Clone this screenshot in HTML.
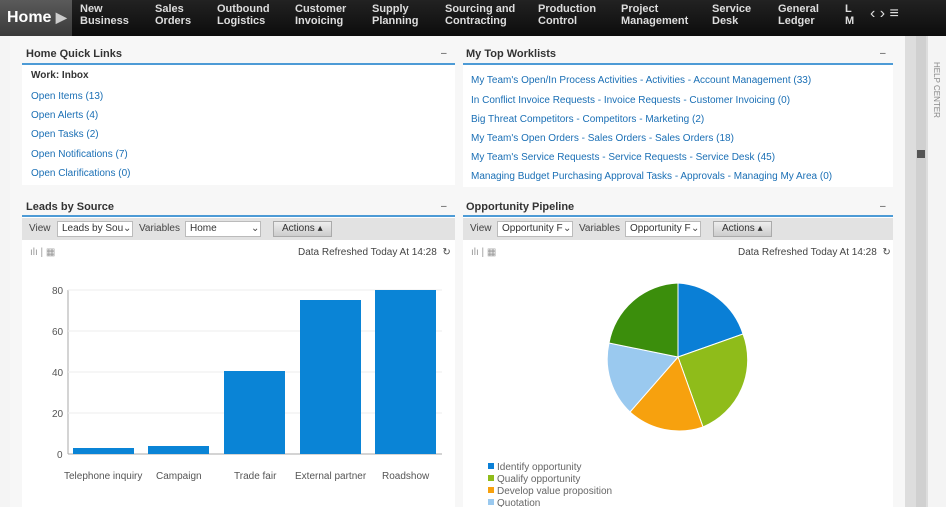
<!DOCTYPE html><html><head><style>
*{margin:0;padding:0;box-sizing:border-box}
body{width:946px;height:507px;overflow:hidden;background:#f4f4f4;font-family:"Liberation Sans",sans-serif;position:relative;font-size:11px;color:#333}
.nav{position:absolute;left:0;top:0;width:946px;height:36px;background:linear-gradient(#222,#0c0c0c)}
.home{position:absolute;left:0;top:0;width:72px;height:36px;background:linear-gradient(#5a5a5a,#3a3a3a);color:#fff;font-weight:bold;font-size:16px;padding:9px 0 0 7px}
.ni{position:absolute;top:3px;color:#ddd;font-size:11px;line-height:12px;font-weight:bold;font-family:"Liberation Sans Narrow","Liberation Sans",sans-serif;font-stretch:condensed}
.a{position:absolute;font-size:10px;color:#1a6fb5}
.t{position:absolute;font-size:11px;font-weight:bold;color:#333}
.ln{position:absolute;height:2px;background:#4d9bd6}
.panel{position:absolute;background:#fff}
.tb{position:absolute;height:22px;background:#e2e2e2}
.sel{position:absolute;top:3px;height:16px;background:#fff;border:1px solid #bbb;font-size:10px;padding:1px 4px;color:#333;white-space:nowrap;overflow:hidden}
.btn{position:absolute;top:3px;height:16px;background:linear-gradient(#eee,#ccc);border:1px solid #aaa;font-size:10px;padding:1px 8px}
.s{position:absolute;font-size:10px;color:#444;white-space:nowrap}
</style></head><body>
<div class="nav">
<div class="home">Home <span style="font-size:14px;color:#ccc">&#9654;</span></div>
<div class="ni" style="left:80px">New<br>Business</div>
<div class="ni" style="left:155px">Sales<br>Orders</div>
<div class="ni" style="left:217px">Outbound<br>Logistics</div>
<div class="ni" style="left:295px">Customer<br>Invoicing</div>
<div class="ni" style="left:372px">Supply<br>Planning</div>
<div class="ni" style="left:445px">Sourcing and<br>Contracting</div>
<div class="ni" style="left:538px">Production<br>Control</div>
<div class="ni" style="left:621px">Project<br>Management</div>
<div class="ni" style="left:712px">Service<br>Desk</div>
<div class="ni" style="left:778px">General<br>Ledger</div>
<div class="ni" style="left:845px">L<br>M</div>
<div class="ni" style="left:870px;top:8px;font-size:16px;font-weight:normal">&lsaquo; &rsaquo; &#8801;</div>
</div>
<div style="position:absolute;left:905px;top:36px;width:41px;height:471px;background:#ddd"></div>
<div style="position:absolute;left:916px;top:36px;width:10px;height:471px;background:#d0d0d0"></div>
<div style="position:absolute;left:917px;top:150px;width:8px;height:8px;background:#555"></div>
<div style="position:absolute;left:928px;top:36px;width:18px;height:471px;background:#f4f4f4"></div>
<div style="position:absolute;left:932px;top:62px;writing-mode:vertical-rl;font-size:8px;color:#888">HELP CENTER</div>
<div style="position:absolute;left:10px;top:36px;width:895px;height:471px;background:#f7f7f7"></div>

<div class="t" style="left:26px;top:48px">Home Quick Links</div><div class="s" style="left:441px;top:48px">&ndash;</div>
<div class="ln" style="left:22px;top:63px;width:433px"></div>
<div class="panel" style="left:22px;top:65px;width:433px;height:120px"></div>
<div class="t" style="left:31px;top:70px;font-size:10px">Work: Inbox</div>
<div class="a" style="left:31px;top:91px">Open Items (13)</div>
<div class="a" style="left:31px;top:110px">Open Alerts (4)</div>
<div class="a" style="left:31px;top:129px">Open Tasks (2)</div>
<div class="a" style="left:31px;top:149px">Open Notifications (7)</div>
<div class="a" style="left:31px;top:168px">Open Clarifications (0)</div>

<div class="t" style="left:466px;top:48px">My Top Worklists</div><div class="s" style="left:880px;top:48px">&ndash;</div>
<div class="ln" style="left:463px;top:63px;width:430px"></div>
<div class="panel" style="left:463px;top:65px;width:430px;height:122px"></div>
<div class="a" style="left:471px;top:75px">My Team's Open/In Process Activities - Activities - Account Management (33)</div>
<div class="a" style="left:471px;top:95px">In Conflict Invoice Requests - Invoice Requests - Customer Invoicing (0)</div>
<div class="a" style="left:471px;top:114px">Big Threat Competitors - Competitors - Marketing (2)</div>
<div class="a" style="left:471px;top:133px">My Team's Open Orders - Sales Orders - Sales Orders (18)</div>
<div class="a" style="left:471px;top:152px">My Team's Service Requests - Service Requests - Service Desk (45)</div>
<div class="a" style="left:471px;top:171px">Managing Budget Purchasing Approval Tasks - Approvals - Managing My Area (0)</div>

<div class="t" style="left:26px;top:201px">Leads by Source</div><div class="s" style="left:441px;top:201px">&ndash;</div>
<div class="ln" style="left:22px;top:215px;width:433px"></div>
<div class="panel" style="left:22px;top:217px;width:433px;height:290px"></div>
<div class="tb" style="left:22px;top:218px;width:433px">
<div class="s" style="left:7px;top:5px">View</div>
<div class="sel" style="left:35px;width:76px">Leads by Sou</div><div class="s" style="left:101px;top:5px">&#8964;</div>
<div class="s" style="left:117px;top:5px">Variables</div>
<div class="sel" style="left:163px;width:76px">Home</div><div class="s" style="left:229px;top:5px">&#8964;</div>
<div class="btn" style="left:251px">Actions &#9652;</div></div>
<div class="s" style="left:30px;top:247px;color:#999">ılı | &#9638;</div>
<div class="s" style="left:298px;top:247px">Data Refreshed Today At 14:28 &nbsp;&#8635;</div>
<svg style="position:absolute;left:22px;top:270px" width="433" height="237">
<g font-family="Liberation Sans" font-size="10" fill="#555">
<line x1="46" y1="20" x2="46" y2="184" stroke="#aaa"/>
<g stroke="#eee"><line x1="46" y1="20" x2="420" y2="20"/><line x1="46" y1="61" x2="420" y2="61"/><line x1="46" y1="102" x2="420" y2="102"/><line x1="46" y1="143" x2="420" y2="143"/></g>
<text x="30" y="24">80</text><text x="30" y="65">60</text><text x="30" y="106">40</text><text x="30" y="147">20</text><text x="35" y="188">0</text>
<line x1="46" y1="184" x2="420" y2="184" stroke="#aaa"/>
<g fill="#0a84d6"><rect x="51" y="178" width="61" height="6"/><rect x="126" y="176" width="61" height="8"/><rect x="202" y="101" width="61" height="83"/><rect x="278" y="30" width="61" height="154"/><rect x="353" y="20" width="61" height="164"/></g>
<text x="42" y="209">Telephone inquiry</text><text x="134" y="209">Campaign</text><text x="212" y="209">Trade fair</text><text x="273" y="209">External partner</text><text x="360" y="209">Roadshow</text>
</g></svg>

<div class="t" style="left:466px;top:201px">Opportunity Pipeline</div><div class="s" style="left:880px;top:201px">&ndash;</div>
<div class="ln" style="left:463px;top:215px;width:430px"></div>
<div class="panel" style="left:463px;top:217px;width:430px;height:290px"></div>
<div class="tb" style="left:463px;top:218px;width:430px">
<div class="s" style="left:7px;top:5px">View</div>
<div class="sel" style="left:34px;width:76px">Opportunity F</div><div class="s" style="left:100px;top:5px">&#8964;</div>
<div class="s" style="left:116px;top:5px">Variables</div>
<div class="sel" style="left:162px;width:76px">Opportunity F</div><div class="s" style="left:228px;top:5px">&#8964;</div>
<div class="btn" style="left:250px">Actions &#9652;</div></div>
<div class="s" style="left:471px;top:247px;color:#999">ılı | &#9638;</div>
<div class="s" style="left:738px;top:247px">Data Refreshed Today At 14:28 &nbsp;&#8635;</div>
<svg style="position:absolute;left:0;top:0" width="946" height="507">
<g stroke="#fff" stroke-width="1">
<path d="M678 357 L678 283 A73 73 0 0 1 743 334 Z" fill="#0a7fd6"/>
<path d="M678 357 L743 334 A73 73 0 0 1 703 427 Z" fill="#8fbc1a"/>
<path d="M678 357 L703 427 A73 73 0 0 1 630 412 Z" fill="#f7a10e"/>
<path d="M678 357 L630 412 A73 73 0 0 1 609 343 Z" fill="#9ac9ef"/>
<path d="M678 357 L609 343 A73 73 0 0 1 678 283 Z" fill="#3b8e0c"/>
</g>
<g font-family="Liberation Sans" font-size="10" fill="#666">
<rect x="488" y="463" width="6" height="6" fill="#0a7fd6"/><text x="497" y="470">Identify opportunity</text>
<rect x="488" y="475" width="6" height="6" fill="#8fbc1a"/><text x="497" y="482">Qualify opportunity</text>
<rect x="488" y="487" width="6" height="6" fill="#f7a10e"/><text x="497" y="494">Develop value proposition</text>
<rect x="488" y="499" width="6" height="6" fill="#9ac9ef"/><text x="497" y="506">Quotation</text>
</g></svg>
</body></html>
